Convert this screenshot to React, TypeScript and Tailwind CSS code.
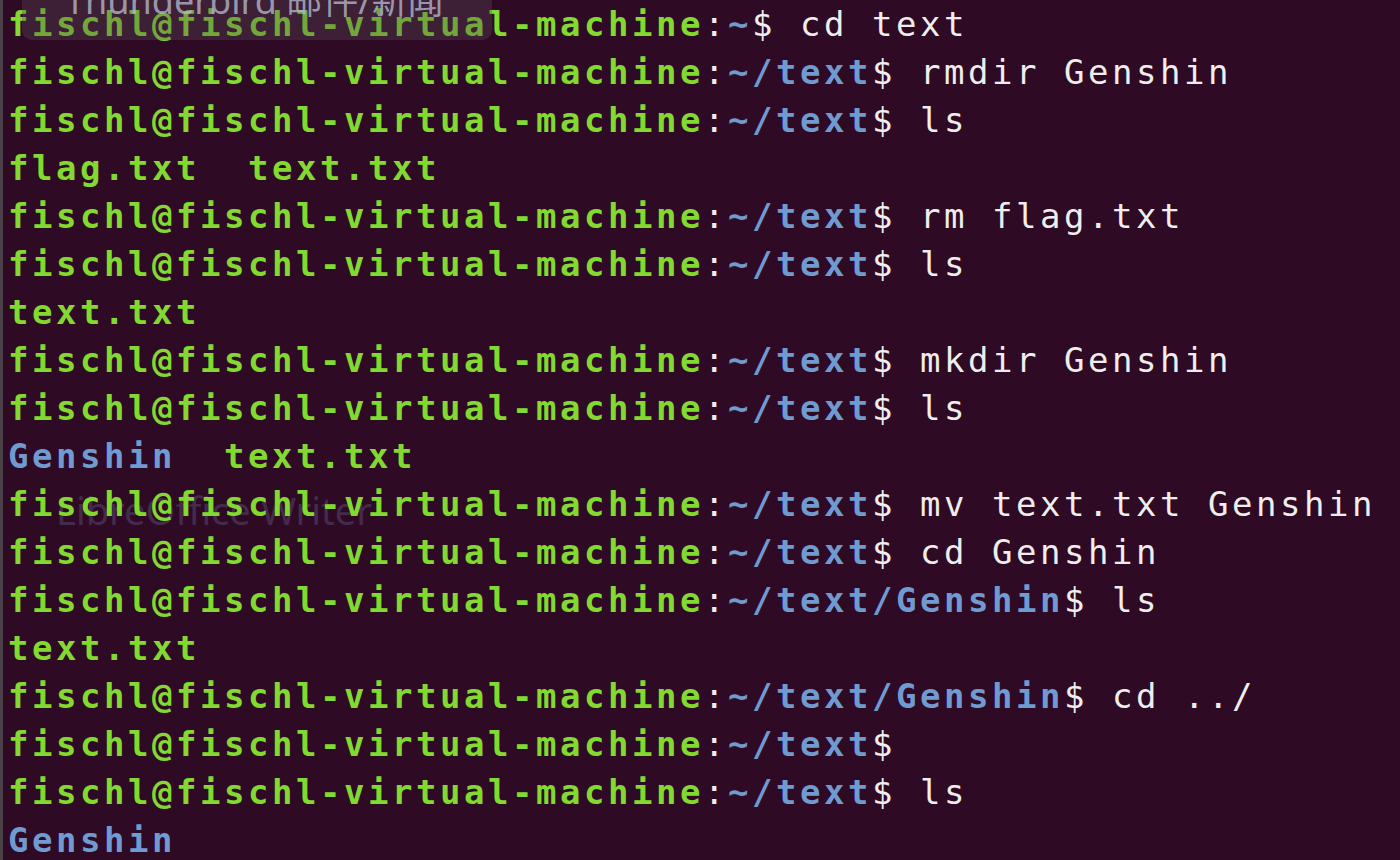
type Seg = { t: string; c?: "green" | "blue" | "white" };

const prompt = (path: string, cmd?: string): Seg[] => [
  { t: "fischl@fischl-virtual-machine", c: "green" },
  { t: ":", c: "white" },
  { t: path, c: "blue" },
  { t: "$" + (cmd ? " " + cmd : ""), c: "white" }
];

const lines: Seg[][] = [
  prompt("~", "cd text"),
  prompt("~/text", "rmdir Genshin"),
  prompt("~/text", "ls"),
  [{ t: "flag.txt  text.txt", c: "green" }],
  prompt("~/text", "rm flag.txt"),
  prompt("~/text", "ls"),
  [{ t: "text.txt", c: "green" }],
  prompt("~/text", "mkdir Genshin"),
  prompt("~/text", "ls"),
  [
    { t: "Genshin", c: "blue" },
    { t: "  ", c: "white" },
    { t: "text.txt", c: "green" }
  ],
  prompt("~/text", "mv text.txt Genshin"),
  prompt("~/text", "cd Genshin"),
  prompt("~/text/Genshin", "ls"),
  [{ t: "text.txt", c: "green" }],
  prompt("~/text/Genshin", "cd ../"),
  prompt("~/text"),
  prompt("~/text", "ls"),
  [{ t: "Genshin", c: "blue" }]
];

const colorClass = {
  green: "text-[#82d92f] font-bold",
  blue: "text-[#6f9bd0] font-bold",
  white: "text-[#eeeeec]"
};

const App = () => {
  return (
    <div className="relative w-[1400px] h-[860px] overflow-hidden bg-[#2f0a24] flex">
      {/* faded launcher label behind the text */}
      <div
        className="absolute left-[56px] top-[490px] text-[38px] leading-[40px] text-[#54426a]/60"
        style={{ fontFamily: '"Noto Sans", sans-serif' }}
      >
        LibreOffice Writer
      </div>

      <div className="w-[3px] bg-[#4a4248]" />
      <div
        className="relative flex-1 flex flex-col pl-[5px] text-[34px] leading-[48px] tracking-[3.53px] whitespace-pre"
        style={{ fontFamily: '"DejaVu Sans Mono", "Liberation Mono", monospace' }}
      >
        {lines.map((line, i) => (
          <div key={i} className="h-[48px]">
            {line.map((s, j) => (
              <span key={j} className={colorClass[s.c ?? "white"]}>
                {s.t}
              </span>
            ))}
          </div>
        ))}
      </div>

      {/* launcher tooltip fading over the terminal */}
      <div className="absolute left-[22px] top-[-8px] w-[470px] h-[48px] rounded-[10px] bg-[#5a4a55]/35" />
      <div
        className="absolute left-[65px] top-[-19px] text-[36px] leading-[40px] text-[#b4b8cc]/80"
        style={{ fontFamily: '"Noto Sans", "Noto Sans CJK SC", sans-serif' }}
      >
        Thunderbird 邮件/新闻
      </div>
    </div>
  );
};

export default App;
